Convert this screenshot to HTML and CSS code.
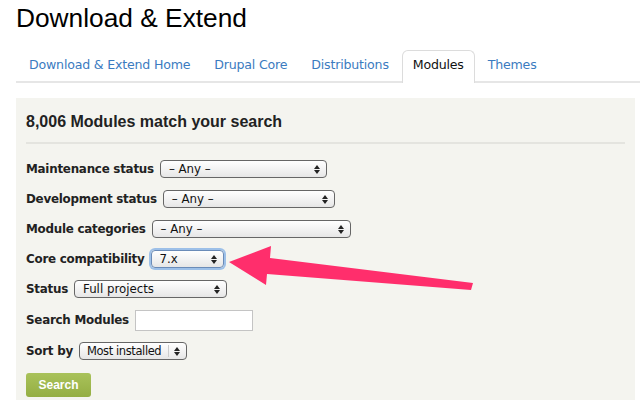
FILE: index.html
```html
<!DOCTYPE html>
<html>
<head>
<meta charset="utf-8">
<link rel="stylesheet" href="styles.css">
</head>
<body>
<div class="page">
  <h1 class="title">Download &amp; Extend</h1>
  <nav class="tabs">
    <a class="tab">Download &amp; Extend Home</a>
    <a class="tab">Drupal Core</a>
    <a class="tab">Distributions</a>
    <a class="tab active">Modules</a>
    <a class="tab">Themes</a>
  </nav>
  <section class="panel">
    <h2 class="panel-title">8,006 Modules match your search</h2>
    <form class="form">
      <div class="row"><label>Maintenance status</label><div class="select w167"><span>– Any –</span><i class="arrows"></i></div></div>
      <div class="row"><label>Development status</label><div class="select w172"><span>– Any –</span><i class="arrows"></i></div></div>
      <div class="row"><label>Module categories</label><div class="select w199"><span>– Any –</span><i class="arrows"></i></div></div>
      <div class="row"><label>Core compatibility</label><div class="select w73 focus"><span>7.x</span><i class="arrows"></i></div></div>
      <div class="row"><label>Status</label><div class="select w153"><span>Full projects</span><i class="arrows"></i></div></div>
      <div class="row tall"><label>Search Modules</label><div class="input"></div></div>
      <div class="row"><label>Sort by</label><div class="select w108 sep"><span>Most installed</span><i class="arrows"></i></div></div>
      <div class="btn">Search</div>
    </form>
  </section>
  <svg class="arrow" width="640" height="400" viewBox="0 0 640 400">
    <polygon points="229,262 271,246 270,258 473,283 471,290 267,274 266,285" fill="#ff2e6c"/>
  </svg>
</div>
</body>
</html>
```
FILE: styles.css
```css
* { box-sizing: border-box; }
html, body { margin: 0; padding: 0; background: #fff; }
.page { position: relative; width: 640px; height: 400px; overflow: hidden; padding-left: 16px; }
.title {
  margin: 0; height: 44px;
  font: 400 26.3px/36px "Liberation Sans", Arial, sans-serif; color: #000;
}
.tabs {
  display: flex; height: 39px; padding-left: 2px;
  border-bottom: 2px solid #e6e6e6; align-items: flex-end;
}
.tab {
  font: 12.6px/27px "DejaVu Sans", sans-serif; color: #3b7bbf;
  padding: 0 10px; margin-right: 2px; height: 31px;
  border: 1px solid transparent; border-bottom: none; border-radius: 6px 6px 0 0;
  letter-spacing: -0.2px;
}
.tab.active {
  color: #111; background: #fff; border-color: #dcdcdc;
  margin-bottom: -2px; height: 33px;
}
.panel {
  margin-top: 15px; width: 619px; height: 310px;
  background: #f4f4ef; padding: 12px 10px 0 10px;
}
.panel-title {
  margin: 0; font: 700 16px/24px "Liberation Sans", Arial, sans-serif; color: #222;
  padding-bottom: 8px; border-bottom: 2px solid #e4e4df; width: 599px;
}
.form { padding-top: 15px; }
.row { display: flex; align-items: center; height: 20px; margin-bottom: 10px; }
.row.tall { height: 22px; margin-bottom: 10px; margin-top: 1px; }
.row label {
  font: 700 11.9px/20px "DejaVu Sans", sans-serif; color: #222; margin-right: 6px;
  letter-spacing: -0.25px;
}
.select {
  position: relative; height: 18px; border: 1px solid #666; border-radius: 4px;
  background: linear-gradient(#ffffff, #f3f3f3 50%, #e6e6e6);
  font: 11.8px/16px "DejaVu Sans", sans-serif; color: #111; padding-left: 8px;
}
.select.focus { border-color: #6a8bb8; box-shadow: 0 0 0 2px #9dc0e8; }
.select.sep { padding-left: 7px; letter-spacing: -0.4px; font-size: 11.5px; }
.select.sep::after {
  content: ""; position: absolute; right: 17px; top: 2px; bottom: 2px; border-left: 1px solid #ccc;
}
.arrows { position: absolute; right: 6px; top: 4px; width: 6px; height: 9px; }
.arrows::before, .arrows::after {
  content: ""; position: absolute; left: 0; border-left: 3px solid transparent; border-right: 3px solid transparent;
}
.arrows::before { top: 0; border-bottom: 4px solid #222; }
.arrows::after { bottom: 0; border-top: 4px solid #222; }
.w167 { width: 167px; } .w172 { width: 172px; } .w199 { width: 199px; }
.w73 { width: 73px; } .w153 { width: 153px; } .w108 { width: 108px; }
.input { width: 118px; height: 21px; background: #fff; border: 1px solid #c4c4c4; }
.btn {
  margin-top: 12px; width: 65px; height: 24px; border-radius: 3px;
  background: linear-gradient(#a9c25a, #94ae43);
  font: 700 12px/24px "Liberation Sans", Arial, sans-serif; color: #fff; text-align: center;
}
.arrow { position: absolute; left: 0; top: 0; pointer-events: none; }
```
